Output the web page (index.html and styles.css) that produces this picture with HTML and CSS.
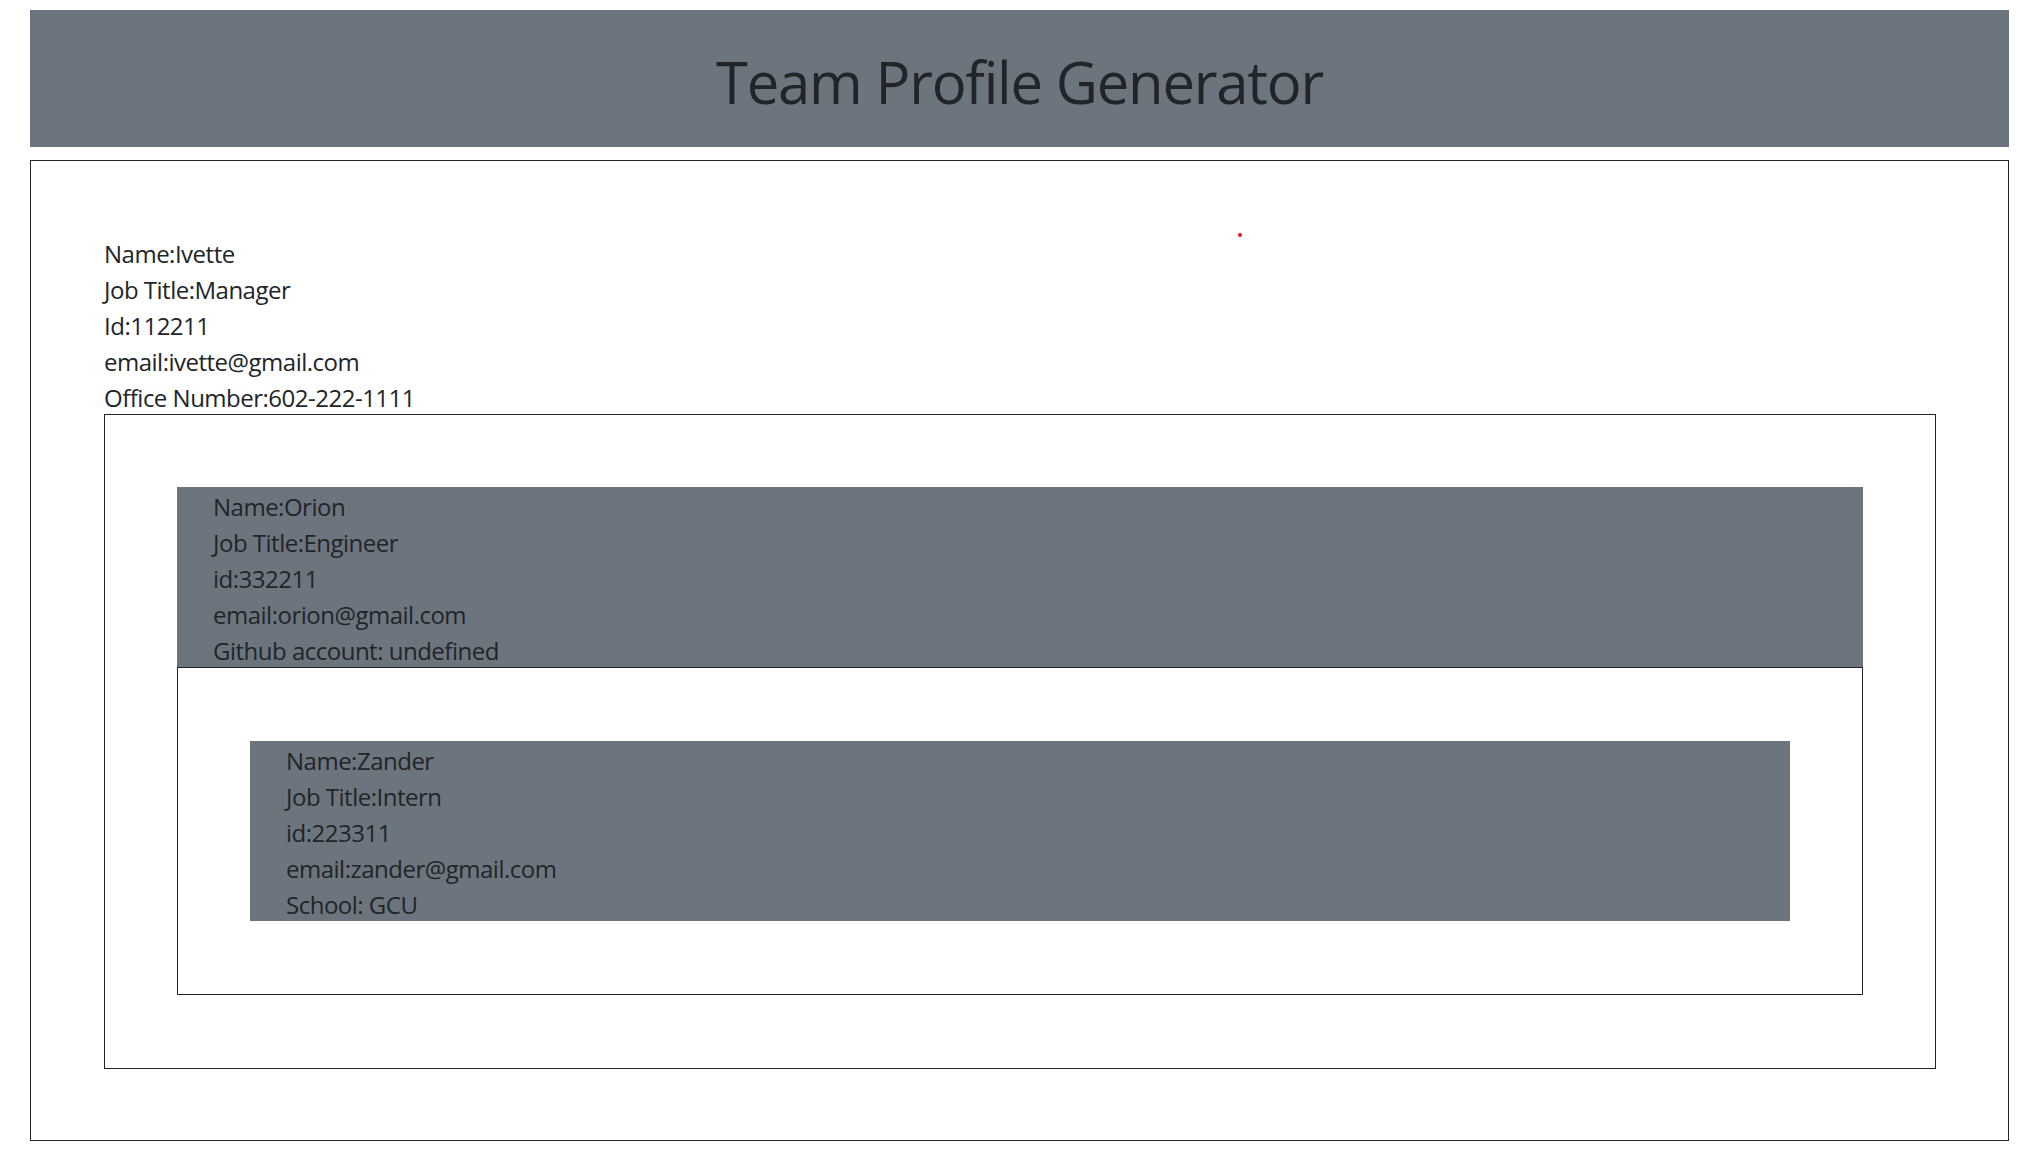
FILE: index.html
```html
<!DOCTYPE html>
<html lang="en">
<head>
<meta charset="utf-8">
<title>Team Profile Generator</title>
<link rel="stylesheet" href="styles.css">
</head>
<body>
<div class="page">
  <header class="jumbo">
    <h1 class="title">Team Profile Generator</h1>
  </header>
  <section class="outer">
    <span class="dot"></span>
    <div class="info">
      <div class="row">Name:Ivette</div>
      <div class="row">Job Title:Manager</div>
      <div class="row">Id:112211</div>
      <div class="row">email:ivette@gmail.com</div>
      <div class="row">Office Number:602-222-1111</div>
    </div>
    <div class="box">
      <div class="card">
        <div class="row">Name:Orion</div>
        <div class="row">Job Title:Engineer</div>
        <div class="row">id:332211</div>
        <div class="row">email:orion@gmail.com</div>
        <div class="row">Github account: undefined</div>
      </div>
      <div class="box inner">
        <div class="card">
          <div class="row">Name:Zander</div>
          <div class="row">Job Title:Intern</div>
          <div class="row">id:223311</div>
          <div class="row">email:zander@gmail.com</div>
          <div class="row">School: GCU</div>
        </div>
      </div>
    </div>
  </section>
</div>
</body>
</html>
```

FILE: styles.css
```css
html, body {
  margin: 0;
  padding: 0;
  background: #ffffff;
}

body {
  font-family: "Open Sans", "Noto Sans", sans-serif;
  font-size: 24px;
  line-height: 36px;
  color: #212529;
}

.page {
  padding: 10px 34px 0 30px;
}

.jumbo {
  height: 137px;
  background: #6c757d;
  display: flex;
  align-items: center;
  justify-content: center;
}

.title {
  margin: 0;
  padding-top: 6px;
  font-weight: 400;
  font-size: 58px;
  line-height: 72px;
  letter-spacing: -1.2px;
  color: #212529;
}

.outer {
  position: relative;
  margin-top: 13px;
  border: 1px solid #212529;
  padding: 73px 72px 71px 73px;
}

.dot {
  position: absolute;
  left: 1207px;
  top: 72px;
  width: 4px;
  height: 4px;
  border-radius: 50%;
  background: #e8141b;
}

.row {
  box-sizing: border-box;
  height: 36px;
  padding-top: 4px;
  line-height: 32px;
  letter-spacing: -0.5px;
  white-space: nowrap;
}

.box {
  border: 1px solid #212529;
  padding: 72px 72px 73px 72px;
}

.box.inner {
  padding: 73px 72px 73px 72px;
}

.card {
  background: #6c757d;
  padding-left: 36px;
}
```
